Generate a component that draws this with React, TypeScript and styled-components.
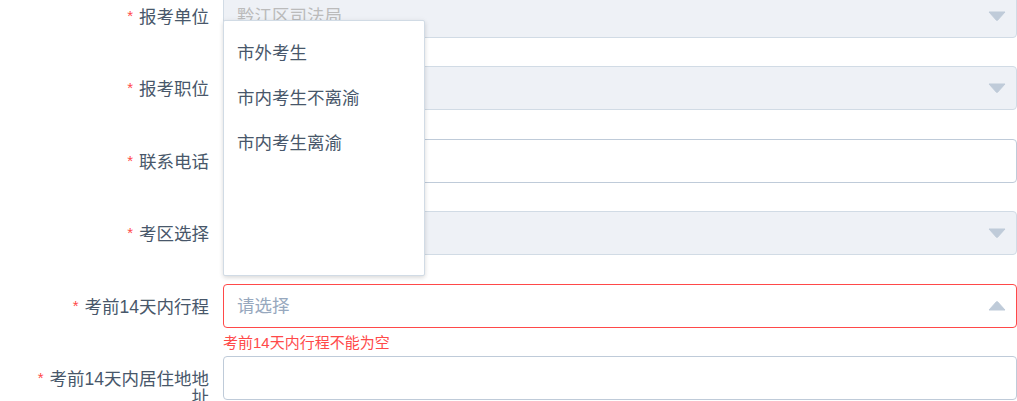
import React from "react";
import styled, { createGlobalStyle } from "styled-components";

const GlobalStyle = createGlobalStyle`
  html, body { margin: 0; padding: 0; background: #fff; }
  body {
    font-family: "Helvetica Neue", Helvetica, "Noto Sans CJK SC", "Noto Sans", Arial, sans-serif;
    overflow: hidden;
  }
`;

const Page = styled.div`
  position: relative;
  width: 1017px;
  height: 401px;
  overflow: hidden;
`;

const Form = styled.form`
  display: flex;
  flex-direction: column;
  margin-top: -6.5px;
`;

const FormItem = styled.div<{ $tight?: boolean }>`
  display: flex;
  align-items: flex-start;
  margin-bottom: ${(p) => (p.$tight ? "6.5px" : "28.5px")};
`;

const Label = styled.label`
  box-sizing: border-box;
  width: 223px;
  flex: 0 0 223px;
  padding: 13px 14px 0 29px;
  text-align: right;
  font-size: 17.5px;
  line-height: 18px;
  color: #48576a;
  &::before {
    content: "*";
    color: #ff4949;
    font-size: 15px;
    margin-right: 6px;
    vertical-align: 2px;
  }
`;

const Control = styled.div`
  flex: 1;
  display: flex;
  flex-direction: column;
`;

type Variant = "disabled" | "normal" | "error";

const InputBox = styled.div<{ $variant: Variant }>`
  box-sizing: border-box;
  height: 44px;
  width: 794px;
  display: flex;
  align-items: center;
  justify-content: space-between;
  padding: 0 10px 0 13px;
  border-radius: 4px;
  border: 1px solid
    ${(p) =>
      p.$variant === "disabled" ? "#d1dbe5" : p.$variant === "error" ? "#ff4949" : "#bfcbd9"};
  background: ${(p) => (p.$variant === "disabled" ? "#eef1f6" : "#fff")};
`;

const InputText = styled.span<{ $tone: "value" | "placeholder" }>`
  font-size: 17.5px;
  line-height: 20px;
  color: ${(p) => (p.$tone === "value" ? "#bbbbbb" : "#97a8be")};
`;

const ErrorText = styled.div`
  padding-top: 7px;
  font-size: 15px;
  line-height: 15px;
  color: #ff4949;
`;

const Dropdown = styled.ul`
  position: absolute;
  left: 223px;
  top: 20px;
  box-sizing: border-box;
  width: 202px;
  height: 256px;
  margin: 0;
  padding: 10px 0 8px;
  list-style: none;
  background: #fff;
  border: 1px solid #d1dbe5;
  border-radius: 2px;
  box-shadow: 0 2px 4px rgba(0, 0, 0, 0.12), 0 0 6px rgba(0, 0, 0, 0.04);
`;

const Option = styled.li`
  height: 45px;
  line-height: 45px;
  padding: 0 13px;
  font-size: 17.5px;
  color: #48576a;
  white-space: nowrap;
`;

const Caret = ({ up }: { up?: boolean }) => (
  <svg width="18" height="10" viewBox="0 0 18 10" style={{ transform: up ? "rotate(180deg)" : undefined }}>
    <path d="M1 1 L17 1 L9.6 9.2 Q9 9.8 8.4 9.2 Z" fill="#bfcbd9" stroke="#bfcbd9" strokeWidth="1" strokeLinejoin="round" />
  </svg>
);

type Row = {
  label: string;
  variant: Variant;
  text?: string;
  tone?: "value" | "placeholder";
  caret?: "down" | "up";
  error?: string;
};

const rows: Row[] = [
  { label: "报考单位", variant: "disabled", text: "黔江区司法局", tone: "value", caret: "down" },
  { label: "报考职位", variant: "disabled", caret: "down" },
  { label: "联系电话", variant: "normal" },
  { label: "考区选择", variant: "disabled", caret: "down" },
  {
    label: "考前14天内行程",
    variant: "error",
    text: "请选择",
    tone: "placeholder",
    caret: "up",
    error: "考前14天内行程不能为空",
  },
  { label: "考前14天内居住地地址", variant: "normal" },
];

const options = ["市外考生", "市内考生不离渝", "市内考生离渝"];

export default function App() {
  return (
    <Page>
      <GlobalStyle />
      <Form>
        {rows.map((r) => (
          <FormItem key={r.label} $tight={!!r.error}>
            <Label>{r.label}</Label>
            <Control>
              <InputBox $variant={r.variant}>
                <InputText $tone={r.tone ?? "value"}>{r.text ?? ""}</InputText>
                {r.caret && <Caret up={r.caret === "up"} />}
              </InputBox>
              {r.error && <ErrorText>{r.error}</ErrorText>}
            </Control>
          </FormItem>
        ))}
      </Form>
      <Dropdown>
        {options.map((o) => (
          <Option key={o}>{o}</Option>
        ))}
      </Dropdown>
    </Page>
  );
}
